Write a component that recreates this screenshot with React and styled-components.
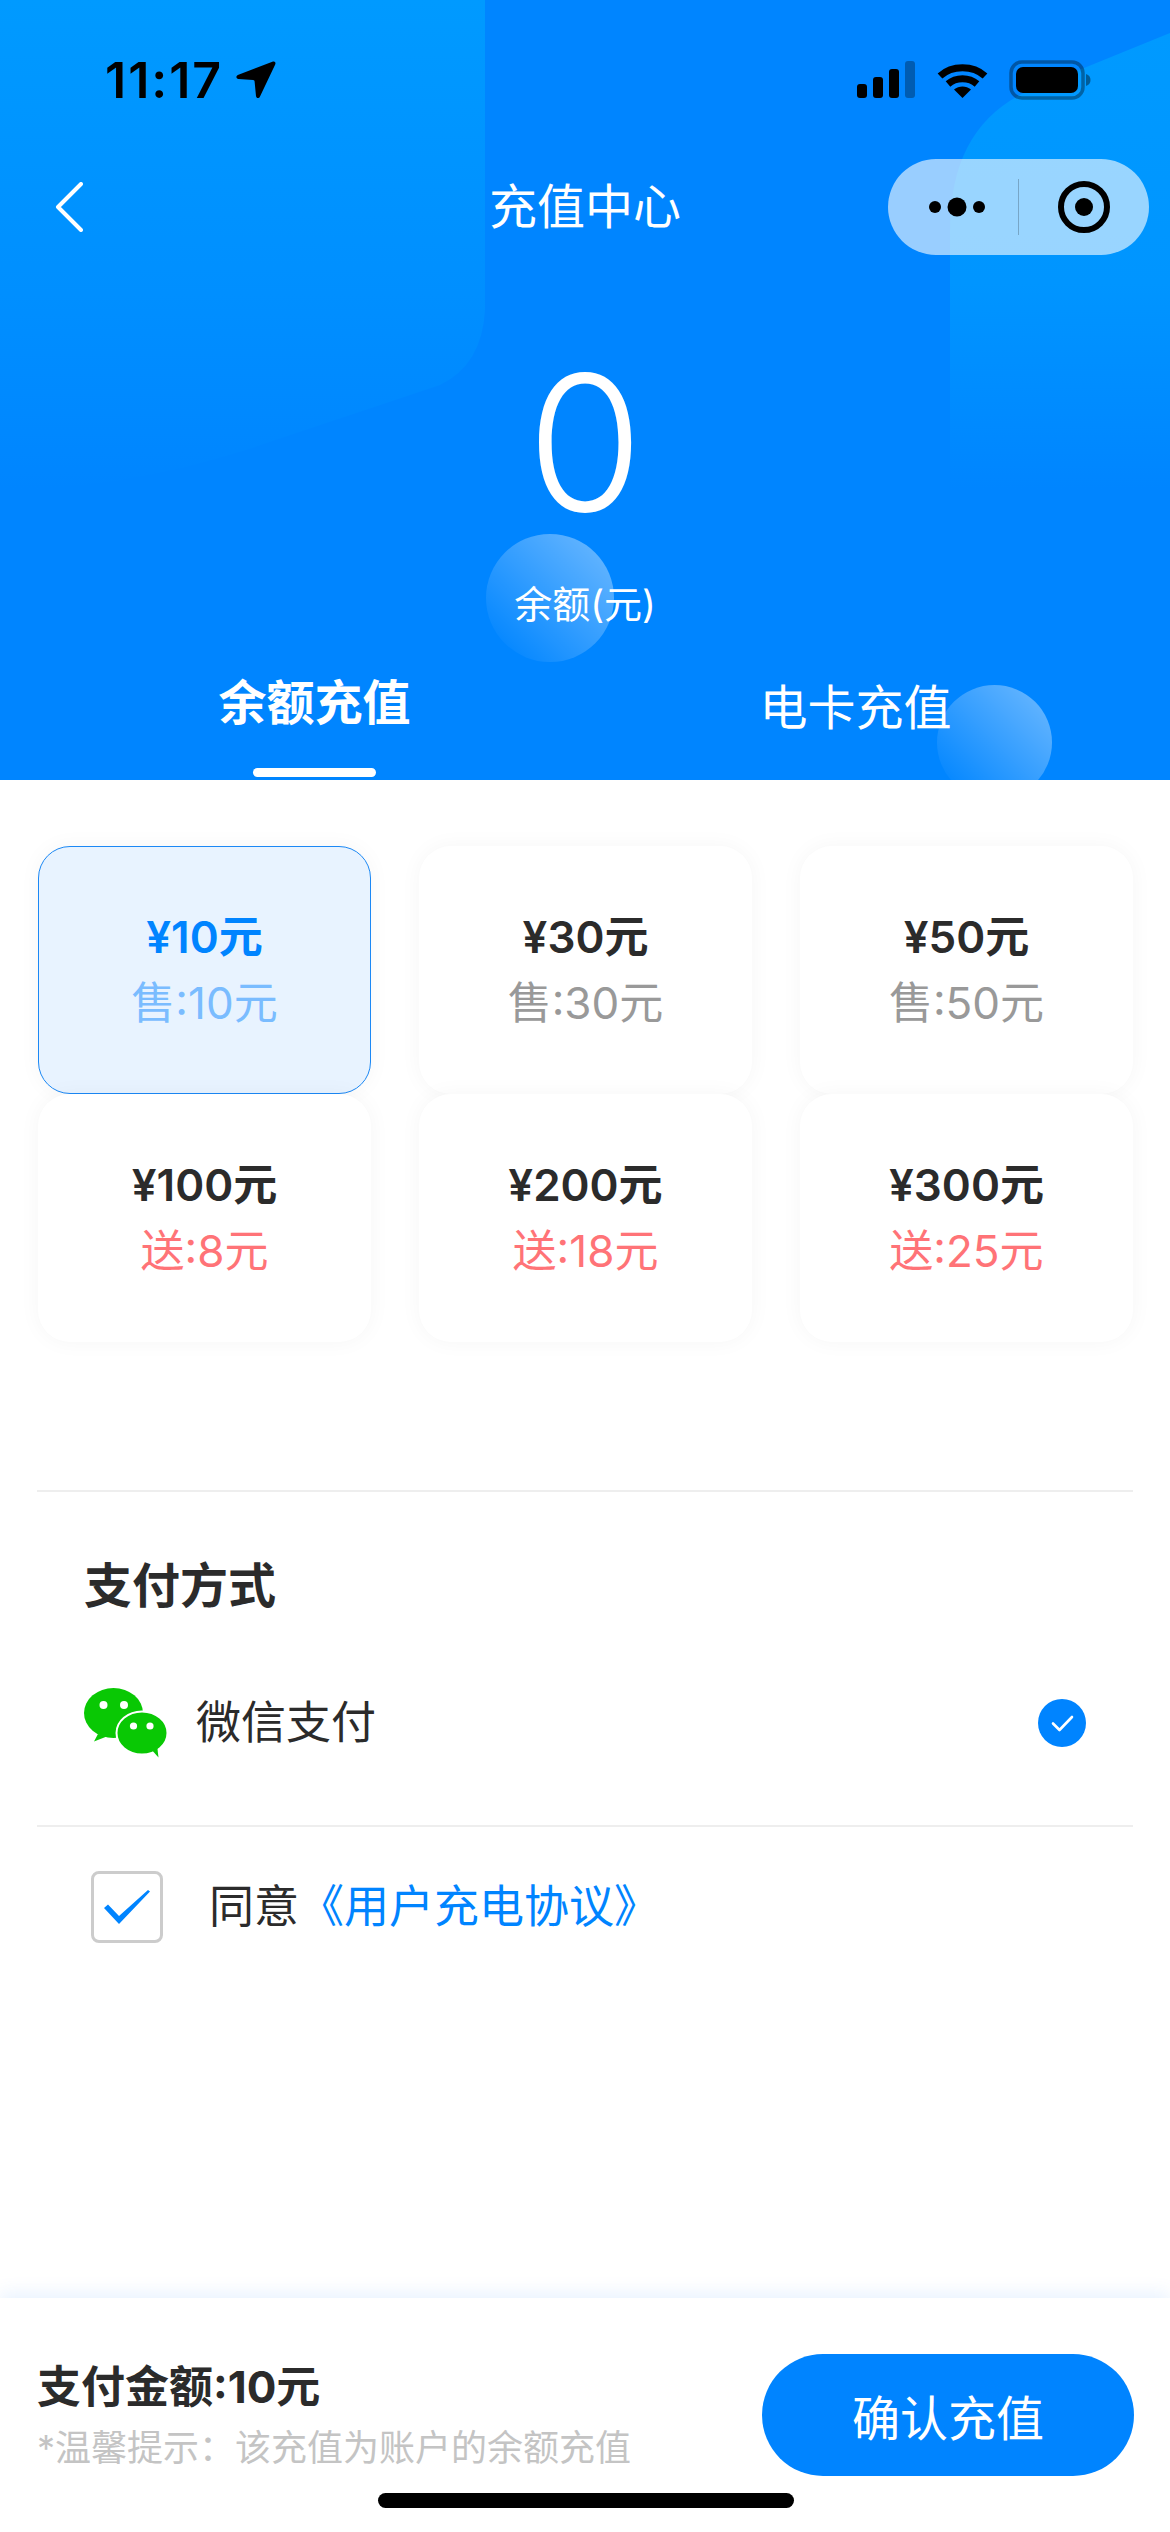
import { useState } from "react";
import styled, { createGlobalStyle } from "styled-components";

const GlobalStyle = createGlobalStyle`
  html, body {
    margin: 0;
    padding: 0;
    background: #fff;
    font-family: Inter, "Noto Sans CJK SC", sans-serif;
  }
  * { box-sizing: border-box; }
`;

const Page = styled.div`
  width: 1170px;
  height: 2532px;
  display: flex;
  flex-direction: column;
  overflow: hidden;
  background: #fff;
  color: #2b2b2b;
`;

const Header = styled.header`
  position: relative;
  height: 780px;
  flex: none;
  overflow: hidden;
  background: #0085ff;
  color: #fff;
`;

const Backdrop = styled.svg`
  position: absolute;
  left: 0;
  top: 0;
  width: 1170px;
  height: 780px;
`;

const Bubble = styled.div`
  position: absolute;
  left: ${(p) => p.$x}px;
  top: ${(p) => p.$y}px;
  width: ${(p) => p.$size}px;
  height: ${(p) => p.$size}px;
  border-radius: 50%;
  background: linear-gradient(45deg, rgba(255, 255, 255, 0.02) 12%, rgba(255, 255, 255, 0.38) 88%);
`;

const HeaderInner = styled.div`
  position: relative;
`;

const StatusBar = styled.div`
  height: 159px;
  padding: 0 79px 0 105px;
  display: flex;
  align-items: center;
  justify-content: space-between;
  color: #000;
`;

const Clock = styled.div`
  display: flex;
  align-items: center;
  gap: 13px;
  font-size: 50px;
  font-weight: 600;
  line-height: 50px;
  letter-spacing: 2px;
`;

const StatusIcons = styled.div`
  display: flex;
  align-items: center;
  gap: 21px;
`;

const NavBar = styled.nav`
  height: 96px;
  padding: 0 21px 0 55px;
  display: grid;
  grid-template-columns: 1fr auto 1fr;
  align-items: center;
`;

const NavTitle = styled.h1`
  margin: 0;
  font-size: 48px;
  font-weight: 400;
  line-height: 60px;
  position: relative;
  left: -17px;
`;

const Capsule = styled.div`
  justify-self: end;
  width: 261px;
  height: 96px;
  border-radius: 48px;
  background: rgba(255, 255, 255, 0.6);
  display: grid;
  grid-template-columns: 130px 1fr;
  align-items: center;
`;

const CapsuleCell = styled.div`
  height: 56px;
  padding-left: ${(p) => (p.$divided ? 0 : 8)}px;
  display: flex;
  align-items: center;
  justify-content: center;
  border-left: ${(p) => (p.$divided ? "1px solid rgba(0, 0, 0, 0.22)" : "none")};
`;

const Balance = styled.section`
  margin-top: 88px;
  display: flex;
  flex-direction: column;
  align-items: center;
`;

const Amount = styled.div`
  font-size: 188px;
  line-height: 200px;
  font-weight: 300;
`;

const AmountLabel = styled.div`
  margin-top: 36px;
  font-size: 38px;
  line-height: 50px;
`;

const Tabs = styled.div`
  margin-top: 44px;
  padding: 0 44px;
  display: grid;
  grid-template-columns: 1fr 1fr;
`;

const Tab = styled.div`
  display: flex;
  flex-direction: column;
  align-items: center;
  padding-top: ${(p) => (p.$active ? 0 : 5)}px;
  font-size: 48px;
  line-height: 60px;
  font-weight: ${(p) => (p.$active ? 700 : 400)};
`;

const TabMark = styled.div`
  margin-top: 35px;
  width: 123px;
  height: 9px;
  border-radius: 5px;
  background: #fff;
`;

const Content = styled.main`
  flex: 1;
  padding: 66px 37px 0;
`;

const PlanGrid = styled.div`
  margin-left: 1px;
  display: grid;
  grid-template-columns: repeat(3, 333px);
  grid-auto-rows: 248px;
  column-gap: 48px;
`;

const PlanCard = styled.div`
  display: flex;
  flex-direction: column;
  align-items: center;
  justify-content: center;
  border-radius: 32px;
  background: ${(p) => (p.$selected ? "#e8f3ff" : "#fff")};
  border: ${(p) => (p.$selected ? "1.5px solid #1b88f5" : "none")};
  box-shadow: 0 0 22px rgba(0, 0, 0, 0.04);
`;

const PlanPrice = styled.div`
  font-size: 44px;
  line-height: 66px;
  font-weight: 600;
  color: ${(p) => (p.$selected ? "#0084ff" : "#2b2b2b")};
`;

const subColors = { sale: "#999999", gift: "#ff7377", selected: "#7abcff" };

const PlanSub = styled.div`
  font-size: 44px;
  line-height: 66px;
  color: ${(p) => subColors[p.$tone]};
`;

const PaySection = styled.section`
  margin-top: 148px;
  height: 337px;
  padding: 64px 47px 0;
  border-top: 2px solid #eeeeee;
  border-bottom: 2px solid #eeeeee;
`;

const SectionTitle = styled.h2`
  margin: 0;
  font-size: 48px;
  line-height: 60px;
  font-weight: 700;
`;

const PayRow = styled.div`
  margin-top: 57px;
  height: 100px;
  display: flex;
  align-items: center;
`;

const PayName = styled.span`
  margin-left: 28px;
  flex: 1;
  font-size: 45px;
  line-height: 60px;
`;

const AgreeRow = styled.div`
  padding: 44px 0 0 54px;
  display: flex;
  align-items: center;
  gap: 46px;
`;

const CheckBox = styled.div`
  width: 72px;
  height: 72px;
  border: 3px solid #cccccc;
  border-radius: 8px;
  display: flex;
  align-items: center;
  justify-content: center;
`;

const AgreeText = styled.div`
  font-size: 45px;
  line-height: 60px;
`;

const AgreeLink = styled.span`
  color: #0084ff;
`;

const Footer = styled.footer`
  flex: none;
  height: 234px;
  padding: 56px 36px 0 37px;
  background: #fff;
  box-shadow: 0 -4px 18px rgba(0, 120, 255, 0.1);
  position: relative;
`;

const FooterRow = styled.div`
  display: flex;
  justify-content: space-between;
`;

const Total = styled.div`
  padding-top: 3px;
`;

const TotalAmount = styled.div`
  font-size: 44px;
  line-height: 60px;
  font-weight: 700;
`;

const TotalTip = styled.div`
  margin-top: 6px;
  font-size: 36px;
  line-height: 50px;
  color: #c4c4c4;
`;

const ConfirmButton = styled.button`
  width: 372px;
  height: 122px;
  border: 0;
  padding: 0;
  border-radius: 61px;
  background: #0084ff;
  color: #fff;
  font-family: inherit;
  font-size: 48px;
`;

const HomeBar = styled.div`
  margin: 17px auto 0;
  width: 416px;
  height: 15px;
  border-radius: 8px;
  background: #000;
`;

const plans = [
  { price: "¥10元", sub: "售:10元", tone: "sale" },
  { price: "¥30元", sub: "售:30元", tone: "sale" },
  { price: "¥50元", sub: "售:50元", tone: "sale" },
  { price: "¥100元", sub: "送:8元", tone: "gift" },
  { price: "¥200元", sub: "送:18元", tone: "gift" },
  { price: "¥300元", sub: "送:25元", tone: "gift" },
];

const HeaderShapes = () => (
  <Backdrop viewBox="0 0 1170 780">
    <defs>
      <linearGradient id="shapeFade" x1="0" y1="0" x2="0" y2="1">
        <stop offset="0" stopColor="#009aff" />
        <stop offset="0.6" stopColor="#008fff" />
        <stop offset="1" stopColor="#0085ff" />
      </linearGradient>
      <linearGradient id="shapeFadeRight" gradientUnits="userSpaceOnUse" x1="0" y1="30" x2="0" y2="490">
        <stop offset="0" stopColor="#009aff" />
        <stop offset="0.55" stopColor="#0095ff" />
        <stop offset="1" stopColor="#0085ff" />
      </linearGradient>
    </defs>
    <path d="M0 0H485V310Q482 365 440 385L246 450Q120 490 0 490Z" fill="url(#shapeFade)" />
    <path d="M1170 33L1030 90Q950 125 950 230V520H1170Z" fill="url(#shapeFadeRight)" />
  </Backdrop>
);

const LocationArrow = () => (
  <svg width="40" height="38" viewBox="0 0 40 38" fill="#000">
    <path d="M37 0.5C39 0 40 1.5 39.2 3.4L24 35.5C23 37.8 20.2 37.4 20 35L18.6 20.5C18.5 19.6 18 19.2 17.2 19.1L2.5 18C0 17.8-0.3 15 1.8 14Z" />
  </svg>
);

const SignalIcon = () => (
  <svg width="60" height="38" viewBox="0 0 60 38" fill="#000">
    <rect x="1" y="23" width="10" height="14" rx="3" />
    <rect x="17" y="16" width="10" height="21" rx="3" />
    <rect x="33" y="8" width="10" height="29" rx="3" />
    <rect x="49" y="0" width="10" height="37" rx="3" opacity="0.3" />
  </svg>
);

const WifiIcon = () => (
  <svg width="51" height="38" viewBox="0 0 51 38" fill="none" stroke="#000" strokeWidth="7">
    <path d="M3 15C15 4 36 4 48 15" />
    <path d="M11 23C19 16 32 16 40 23" />
    <path d="M25.5 37L17 28.5C22 24.5 29 24.5 34 28.5Z" fill="#000" stroke="none" />
  </svg>
);

const BatteryIcon = () => (
  <svg width="82" height="40" viewBox="0 0 82 40">
    <rect x="2" y="2" width="72" height="36" rx="11" fill="none" stroke="#000" strokeOpacity="0.35" strokeWidth="3.5" />
    <rect x="7" y="7" width="62" height="26" rx="7" fill="#000" />
    <path d="M77 14C80 15 81.5 17 81.5 20S80 25 77 26Z" fill="#000" opacity="0.4" />
  </svg>
);

const BackIcon = () => (
  <svg width="28" height="50" viewBox="0 0 28 50" fill="none" stroke="#fff" strokeWidth="4" strokeLinecap="round" strokeLinejoin="round">
    <path d="M26 2L3 25L26 48" />
  </svg>
);

const MoreIcon = () => (
  <svg width="56" height="20" viewBox="0 0 56 20" fill="#000">
    <circle cx="6" cy="10" r="6" />
    <circle cx="28" cy="10" r="9.5" />
    <circle cx="50" cy="10" r="6" />
  </svg>
);

const TargetIcon = () => (
  <svg width="52" height="52" viewBox="0 0 52 52">
    <circle cx="26" cy="26" r="23" fill="none" stroke="#000" strokeWidth="6" />
    <circle cx="26" cy="26" r="9" fill="#000" />
  </svg>
);

const WechatIcon = () => (
  <svg width="84" height="70" viewBox="0 0 84 70">
    <ellipse cx="29.5" cy="25" rx="29.5" ry="25" fill="#09c804" />
    <path d="M14 46L10 53.5L24 48Z" fill="#09c804" />
    <circle cx="19.5" cy="17" r="4" fill="#fff" />
    <circle cx="40" cy="17" r="4" fill="#fff" />
    <ellipse cx="58" cy="45" rx="25.5" ry="21.5" fill="#09c804" stroke="#fff" strokeWidth="2" />
    <path d="M66 60L74.5 69.5L73 57Z" fill="#09c804" />
    <circle cx="49.5" cy="38" r="3.6" fill="#fff" />
    <circle cx="66" cy="38" r="3.6" fill="#fff" />
  </svg>
);

const PayCheck = () => (
  <svg width="48" height="48" viewBox="0 0 48 48" fill="none">
    <circle cx="24" cy="24" r="24" fill="#0084ff" />
    <path d="M15 24.5L21.5 31L34 18" stroke="#fff" strokeWidth="2.6" strokeLinecap="round" strokeLinejoin="round" />
  </svg>
);

const AgreeCheck = () => (
  <svg width="48" height="36" viewBox="0 0 48 36">
    <path d="M1 19L5 15.5L16 27L45 1L47 2.5L16 35Z" fill="#0084ff" />
  </svg>
);

const App = () => {
  const [selected, setSelected] = useState(0);

  return (
    <Page>
      <GlobalStyle />
      <Header>
        <HeaderShapes />
        <Bubble $x={486} $y={534} $size={128} />
        <Bubble $x={937} $y={685} $size={115} />
        <HeaderInner>
          <StatusBar>
            <Clock>
              11:17
              <LocationArrow />
            </Clock>
            <StatusIcons>
              <SignalIcon />
              <WifiIcon />
              <BatteryIcon />
            </StatusIcons>
          </StatusBar>
          <NavBar>
            <BackIcon />
            <NavTitle>充值中心</NavTitle>
            <Capsule>
              <CapsuleCell>
                <MoreIcon />
              </CapsuleCell>
              <CapsuleCell $divided>
                <TargetIcon />
              </CapsuleCell>
            </Capsule>
          </NavBar>
          <Balance>
            <Amount>0</Amount>
            <AmountLabel>余额(元)</AmountLabel>
          </Balance>
          <Tabs>
            <Tab $active>
              余额充值
              <TabMark />
            </Tab>
            <Tab>电卡充值</Tab>
          </Tabs>
        </HeaderInner>
      </Header>

      <Content>
        <PlanGrid>
          {plans.map((plan, i) => (
            <PlanCard key={plan.price} $selected={i === selected} onClick={() => setSelected(i)}>
              <PlanPrice $selected={i === selected}>{plan.price}</PlanPrice>
              <PlanSub $tone={i === selected ? "selected" : plan.tone}>{plan.sub}</PlanSub>
            </PlanCard>
          ))}
        </PlanGrid>

        <PaySection>
          <SectionTitle>支付方式</SectionTitle>
          <PayRow>
            <WechatIcon />
            <PayName>微信支付</PayName>
            <PayCheck />
          </PayRow>
        </PaySection>

        <AgreeRow>
          <CheckBox>
            <AgreeCheck />
          </CheckBox>
          <AgreeText>
            同意<AgreeLink>《用户充电协议》</AgreeLink>
          </AgreeText>
        </AgreeRow>
      </Content>

      <Footer>
        <FooterRow>
          <Total>
            <TotalAmount>支付金额:10元</TotalAmount>
            <TotalTip>*温馨提示：该充值为账户的余额充值</TotalTip>
          </Total>
          <ConfirmButton>确认充值</ConfirmButton>
        </FooterRow>
        <HomeBar />
      </Footer>
    </Page>
  );
};

export default App;
